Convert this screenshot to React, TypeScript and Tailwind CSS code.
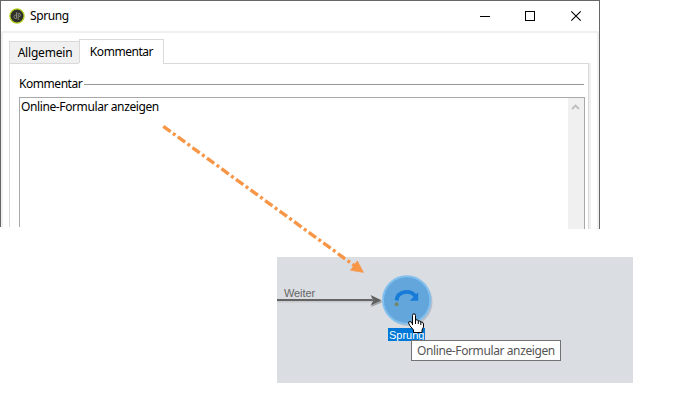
import React from "react";

function AppIcon() {
  return (
    <svg width="16" height="16" viewBox="0 0 16 16" className="shrink-0">
      <circle cx="8" cy="8" r="7.1" fill="#303129" stroke="#b4d328" strokeWidth="1.3" />
      <path d="M7.5 7H6.8Q5 7 5 8.8T6.8 10.5H7.5V4.2M9.2 12V5.3H9.8Q11.4 5.3 11.4 7T9.8 8.8" fill="none" stroke="#85867a" strokeWidth="1" />
    </svg>
  );
}

function TitleBar() {
  return (
    <div className="flex h-[30px] shrink-0 items-center bg-white pl-2">
      <AppIcon />
      <span className="ml-[5px] text-[12px] leading-4 tracking-[-0.4px] text-black">Sprung</span>
      <svg className="mr-[17px] ml-auto" width="102" height="12" viewBox="0 0 102 12" fill="none" stroke="#000" shapeRendering="crispEdges">
        <path d="M0 6.5h10" />
        <rect x="45.5" y="1.5" width="9" height="9" />
        <path d="M91.3 1.3l9.4 9.4M100.7 1.3l-9.4 9.4" shapeRendering="auto" strokeWidth="1.1" />
      </svg>
    </div>
  );
}

function Dialog() {
  return (
    <section className="flex h-[229px] w-[600px] flex-col overflow-hidden border-t border-r border-l border-[#666] bg-white">
      <TitleBar />
      <div className="flex min-h-0 flex-1 flex-col border-x-2 border-t-2 border-[#f0f0f0] pr-[6px] pl-[6px]">
        <div className="mt-[6px] flex h-6 shrink-0 items-end">
          <div className="flex h-[22px] w-[70px] items-center justify-center border-t border-l border-[#d9d9d9] bg-[#f0f0f0] pl-px text-[12px] tracking-[-0.2px]">
            Allgemein
          </div>
          <div className="flex h-6 w-[85px] items-center justify-center border-x border-t border-[#d9d9d9] bg-white pt-px text-[12px] tracking-[-0.45px]">
            Kommentar
          </div>
        </div>
        <div className="flex min-h-0 flex-1">
          <div className="flex flex-1 flex-col border-r border-l border-[#d9d9d9] pr-[3px] pl-[9px]">
            <div className="-mr-[4px] -ml-[9px] flex h-px shrink-0">
              <span className="w-[69px] bg-[#d9d9d9]" />
              <span className="w-[84px]" />
              <span className="flex-1 bg-[#d9d9d9]" />
            </div>
            <div className="mt-[12px] flex h-4 items-center">
              <span className="w-[65px] text-[12px] leading-4 tracking-[-0.45px]">Kommentar</span>
              <span className="mr-px h-px flex-1 bg-[#999]" />
            </div>
            <div className="mt-[5px] flex flex-1 justify-between border-x border-t border-[#a8a8aa]">
              <p className="pt-px pl-px text-[12px] leading-4 tracking-[-0.39px] whitespace-nowrap">Online-Formular anzeigen</p>
              <div className="flex w-4 justify-center bg-[#f0f0f0] pt-[6px]">
                <svg width="10" height="6" viewBox="0 0 10 6">
                  <path d="M1 5L4.5 1.5L8 5" fill="none" stroke="#bdbdbd" strokeWidth="1.8" />
                </svg>
              </div>
            </div>
          </div>
          <div className="w-[2px] bg-[#f0f0f0]" />
        </div>
      </div>
    </section>
  );
}

function Diagram() {
  return (
    <section className="relative mt-7 ml-[277px] h-[126px] w-[356px] bg-[#dadde2]">
      <svg className="absolute inset-0" width="356" height="126">
        <path d="M0 44.5H97" stroke="#c7c9cc" strokeWidth="2" />
        <path d="M0 43H97" stroke="#646464" strokeWidth="2" />
        <path d="M94 40l12 5-12 5 3-5z" fill="#a0a2a5" />
        <path d="M93.5 38l11 5.2-11 5.2 3-5.2z" fill="#606060" />
        <circle cx="131.5" cy="45" r="24" fill="#b8c0c9" />
        <circle cx="129.7" cy="43" r="23.7" fill="#63a6dc" stroke="#83c0ee" strokeWidth="2" />
        <path d="M119.6 43.5C120.3 34 133.5 32.2 138.4 39.4" fill="none" stroke="#187bd8" strokeWidth="3.8" />
        <path d="M141.2 35.3V43.7H132.8z" fill="#187bd8" />
        <circle cx="119.6" cy="47.3" r="2" fill="#73876b" />
      </svg>
      <span className="absolute top-[30px] left-[7px] font-['Liberation_Sans',sans-serif] text-[11px] leading-[13px] tracking-[-0.1px] text-[#666]">Weiter</span>
      <span className="absolute top-[71px] left-[111px] h-[13px] w-[37px] bg-[#0078d7] pl-px font-['Liberation_Sans',sans-serif] text-[11px] leading-[14px] text-white">Sprung</span>
      <div className="absolute top-[83px] left-[134px] h-[21px] w-[150px] border border-[#737373] bg-white pl-[5px] text-[12px] leading-[19px] tracking-[-0.39px] whitespace-nowrap text-[#555]">
        Online-Formular anzeigen
      </div>
      <svg className="absolute top-[56px] left-[130px]" width="18" height="22" viewBox="0 0 18 22">
        <path d="M5.5 12V2.5Q5.5.8 7 .8T8.5 2.5V7Q10.8 6 11.3 8 13.3 7.3 13.8 9 16.3 8.5 16.5 11V14L15 17V19.5H6.5V17L3 12.8 1.5 10Q1.5 8.5 3 8.5T5.5 11" fill="#fff" stroke="#000" strokeWidth="1" />
        <path d="M8.5 7v4M11.3 8v3M13.8 9v3" stroke="#000" />
      </svg>
    </section>
  );
}

function Connector() {
  return (
    <svg className="pointer-events-none absolute inset-0" width="673" height="403">
      <path d="M163.3 126.3L355 266" stroke="#f79646" strokeWidth="3.4" strokeDasharray="9 3 3 3" />
      <path d="M357.3 260.8L363.5 272.4L350.5 270.3z" fill="#f79646" stroke="#f79646" strokeWidth="0.6" />
    </svg>
  );
}

export default function App() {
  return (
    <main className="relative h-[403px] w-[673px] overflow-hidden bg-white font-['Noto_Sans','Open_Sans',sans-serif] text-black">
      <Dialog />
      {/* The dialog's bottom-left corner is clipped slightly higher than its right side. */}
      <div className="absolute top-[227px] left-0 h-[2px] w-[60px] bg-white" />
      <Diagram />
      <Connector />
    </main>
  );
}
